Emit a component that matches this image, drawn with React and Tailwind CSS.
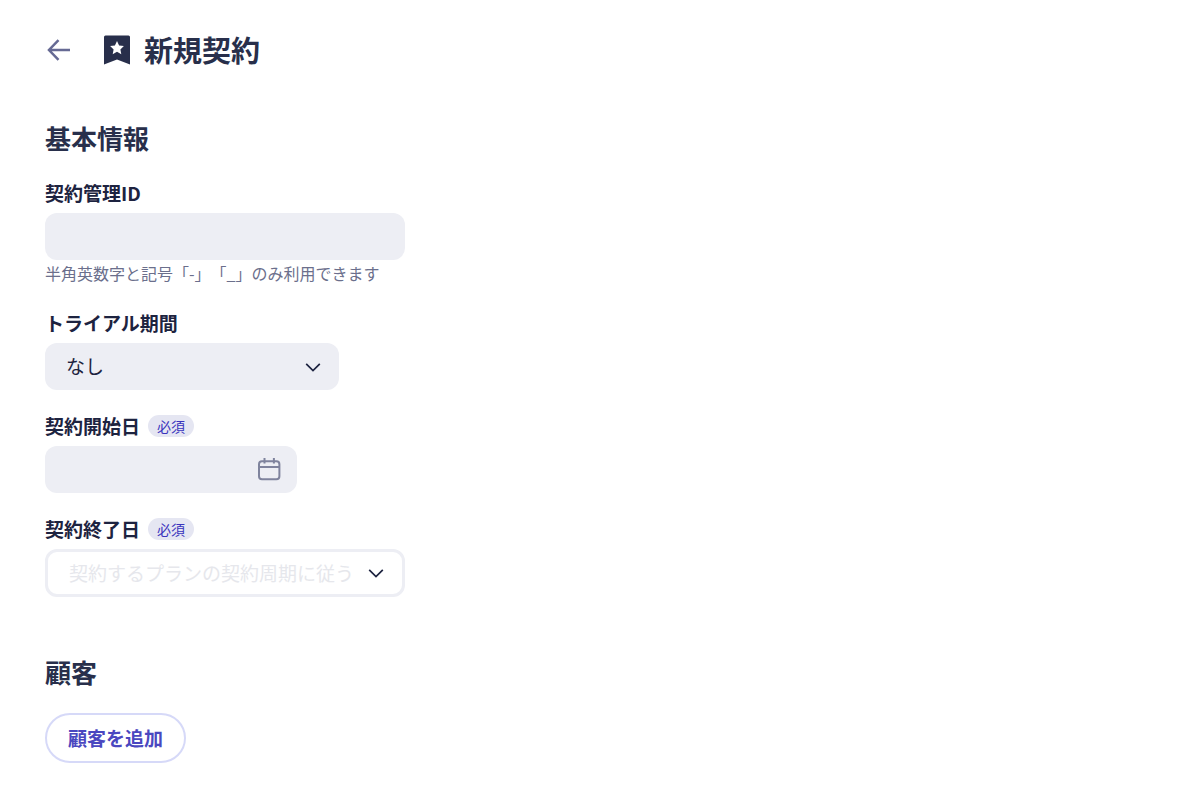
import React, { useState } from "react";

const ArrowLeftIcon = () => (
  <svg width="24" height="24" viewBox="0 0 24 24" fill="none" stroke="currentColor" strokeWidth="2.5" aria-hidden="true">
    <path d="M23 12H2.5M11.5 2.2L2 12l9.5 9.8" />
  </svg>
);

const ContractIcon = () => (
  <svg width="26" height="30" viewBox="0 0 26 30" aria-hidden="true">
    <path d="M1.5 0.5h23Q26 0.5 26 2V29.5L13 24.5 0 29.5V2Q0 0.5 1.5 0.5z" fill="#282f4b" />
    <path
      d="M13 6l2.1 4.4 4.8.6-3.5 3.4.9 4.8-4.3-2.4-4.3 2.4.9-4.8L6.1 11l4.8-.6z"
      fill="#fff"
    />
  </svg>
);

const ChevronIcon = () => (
  <svg width="16" height="16" viewBox="0 0 16 16" fill="none" stroke="#1d2340" strokeWidth="1.7" aria-hidden="true">
    <path d="M1.2 4.8L8 11.6l6.8-6.8" />
  </svg>
);

const CalendarIcon = () => (
  <svg className="block" width="24" height="24" viewBox="0 0 24 24" fill="none" stroke="currentColor" strokeWidth="2" aria-hidden="true">
    <rect x="2" y="3.2" width="20.4" height="18" rx="3" />
    <path d="M2 9h20.4M7.5 0v5.4M16.9 0v5.4" />
  </svg>
);

const RequiredBadge = () => (
  <span className="rounded-full bg-[#e5e6f2] px-[9px] text-[14px] font-normal leading-[22px] text-[#3a34bd]">必須</span>
);

const Field = ({ id, label, required, help, children }) => (
  <div>
    <div className="mb-1.5 flex items-center gap-2">
      <label htmlFor={id} className="text-[19px] font-bold leading-7 text-[#1d2340]">
        {label}
      </label>
      {required && <RequiredBadge />}
    </div>
    {children}
    {help && <p className="pb-px text-[16px] leading-[26px] text-[#6b6f8c] [text-spacing-trim:space-all]">{help}</p>}
  </div>
);

const SelectBox = ({ className, children, ...props }) => (
  <div className={`relative max-w-full rounded-xl ${className}`}>
    <select
      className="block h-full w-full cursor-pointer appearance-none bg-transparent px-[21px] text-[19px] outline-none"
      {...props}
    >
      {children}
    </select>
    <span className="pointer-events-none absolute inset-y-0 right-[18px] flex items-center">
      <ChevronIcon />
    </span>
  </div>
);

const App = () => {
  const [contractId, setContractId] = useState("");
  const [trial, setTrial] = useState("none");
  const [startDate, setStartDate] = useState("");
  const [endDate, setEndDate] = useState("cycle");

  return (
    <main className="px-[45px] pb-5 pt-6 font-['Noto_Sans_CJK_JP',sans-serif] text-[#1d2340]">
      <header className="mb-[42px] flex h-[52px] items-center">
        <button type="button" aria-label="戻る" className="mr-[33px] cursor-pointer pl-0.5 text-[#666a94]">
          <ArrowLeftIcon />
        </button>
        <ContractIcon />
        <h1 className="ml-3.5 pb-0.5 text-[29px] font-bold leading-[50px] text-[#282f4b]">新規契約</h1>
      </header>

      <form onSubmit={(e) => e.preventDefault()}>
        <section>
          <h2 className="mb-[21px] text-[26px] font-bold leading-10 text-[#282f4b]">基本情報</h2>
          <div className="flex flex-col gap-[22px]">
            <Field id="contractId" label="契約管理ID" help="半角英数字と記号「-」「_」のみ利用できます">
              <input
                id="contractId"
                type="text"
                value={contractId}
                onChange={(e) => setContractId(e.target.value)}
                className="block h-[47px] w-[360px] max-w-full rounded-xl bg-[#edeef4] px-[21px] text-[19px] outline-none"
              />
            </Field>

            <Field id="trial" label="トライアル期間">
              <SelectBox
                id="trial"
                value={trial}
                onChange={(e) => setTrial(e.target.value)}
                className="h-[47px] w-[294px] bg-[#edeef4]"
              >
                <option value="none">なし</option>
                <option value="set">あり</option>
              </SelectBox>
            </Field>

            <Field id="startDate" label="契約開始日" required>
              <div className="flex h-[47px] w-[252px] max-w-full items-center rounded-xl bg-[#edeef4] pl-[21px] pr-4">
                <input
                  id="startDate"
                  type="text"
                  value={startDate}
                  onChange={(e) => setStartDate(e.target.value)}
                  className="min-w-0 flex-1 bg-transparent text-[19px] outline-none"
                />
                <button type="button" aria-label="カレンダーを開く" className="cursor-pointer text-[#7f839d]">
                  <CalendarIcon />
                </button>
              </div>
            </Field>

            <Field id="endDate" label="契約終了日" required>
              <SelectBox
                id="endDate"
                value={endDate}
                onChange={(e) => setEndDate(e.target.value)}
                className="h-12 w-[360px] border-3 border-[#edeef4] text-[#e6e7ec]"
              >
                <option value="cycle">契約するプランの契約周期に従う</option>
                <option value="date">日付を指定する</option>
              </SelectBox>
            </Field>
          </div>
        </section>

        <section className="mt-[55px]">
          <h2 className="mb-[21px] text-[26px] font-bold leading-10 text-[#282f4b]">顧客</h2>
          <button
            type="button"
            className="h-[50px] cursor-pointer rounded-full border-2 border-[#d6d9f8] px-[21px] text-[19px] font-bold text-[#4a47c0]"
          >
            顧客を追加
          </button>
        </section>
      </form>
    </main>
  );
};

export default App;
